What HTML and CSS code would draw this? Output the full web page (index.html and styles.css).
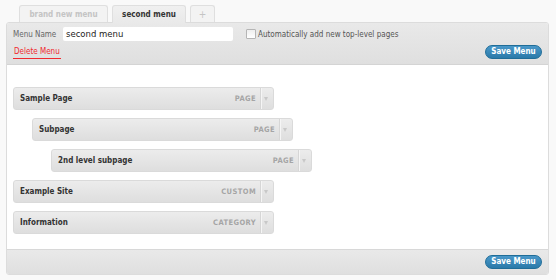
FILE: index.html
```html
<!DOCTYPE html>
<html>
<head>
<meta charset="utf-8">
<link rel="stylesheet" href="styles.css">
</head>
<body>
<div class="wrap">
  <div class="tabs">
    <div class="tab">brand new menu</div>
    <div class="tab active">second menu</div>
    <div class="tab plus">+</div>
  </div>
  <div class="panel">
    <div class="header">
      <div class="row1">
        <span class="label">Menu Name</span>
        <div class="input">second menu</div>
        <span class="check"></span>
        <span class="auto">Automatically add new top-level pages</span>
      </div>
      <div class="row2">
        <a class="delete">Delete Menu</a>
        <button class="save">Save Menu</button>
      </div>
    </div>
    <div class="body">
      <div class="item"><span class="title">Sample Page</span><span class="type">PAGE</span><span class="arrow"></span></div>
      <div class="item l1"><span class="title">Subpage</span><span class="type">PAGE</span><span class="arrow"></span></div>
      <div class="item l2"><span class="title">2nd level subpage</span><span class="type">PAGE</span><span class="arrow"></span></div>
      <div class="item"><span class="title">Example Site</span><span class="type">CUSTOM</span><span class="arrow"></span></div>
      <div class="item"><span class="title">Information</span><span class="type">CATEGORY</span><span class="arrow"></span></div>
    </div>
    <div class="footer">
      <button class="save">Save Menu</button>
    </div>
  </div>
</div>
</body>
</html>
```
FILE: styles.css
```css
* { box-sizing: border-box; }
html, body { margin: 0; padding: 0; }
body {
  background: #f9f9f9;
  font-family: "DejaVu Sans Condensed", "DejaVu Sans", sans-serif;
  font-size: 8px;
  color: #333;
  width: 556px;
  height: 280px;
  overflow: hidden;
}
.wrap { padding: 5px 7px 0 6px; }
.tabs {
  display: flex;
  gap: 4px;
  padding-left: 13px;
  height: 17px;
  align-items: flex-end;
}
.tab {
  height: 17px;
  padding: 0;
  border: 1px solid #dfdfdf;
  border-bottom: none;
  border-radius: 3px 3px 0 0;
  background: #f3f3f3;
  color: #c4c4c4;
  font-weight: bold;
  font-size: 8px;
  white-space: nowrap;
  display: flex;
  align-items: center;
  justify-content: center;
  width: 89px;
}
.tab.active {
  background: linear-gradient(#f0f0f0, #e9e9e9);
  color: #333;
  width: 74px;
  height: 18px;
  margin-bottom: -1px;
}
.tab.plus { width: 25px; font-weight: normal; font-size: 10px; }
.panel {
  border: 1px solid #dcdcdc;
  border-radius: 3px;
  overflow: hidden;
  width: 543px;
}
.header {
  height: 42px;
  background: linear-gradient(#e9e9e9, #dfdfdf);
  border-bottom: 1px solid #d4d4d4;
  padding: 4px 6px 0 6px;
}
.row1 { display: flex; align-items: center; height: 14px; }
.label { color: #666; width: 50px; }
.input {
  width: 170px;
  height: 14px;
  background: #fff;
  border-radius: 2px;
  color: #222;
  font-family: "DejaVu Sans", sans-serif;
  font-size: 8.5px;
  padding-left: 3px;
  line-height: 14px;
}
.check {
  width: 10px;
  height: 10px;
  border: 1px solid #b5b5b5;
  background: linear-gradient(#eee, #fff);
  border-radius: 1px;
  margin-left: 13px;
  margin-right: 2px;
}
.auto { color: #555; }
.row2 {
  display: flex;
  justify-content: space-between;
  align-items: flex-end;
  margin-top: 4px;
  height: 14px;
}
.delete {
  color: #f0292f;
  border-bottom: 1px solid #f0292f;
  padding: 0 1px 1px 1px;
  line-height: 10px;
}
.save {
  width: 57px;
  height: 14px;
  padding: 0;
  border: 1px solid #1f6d98;
  border-radius: 8px;
  background: linear-gradient(#4a98c9, #2a7aa9);
  color: #fff;
  font-family: "DejaVu Sans Condensed", "DejaVu Sans", sans-serif;
  font-weight: bold;
  font-size: 8px;
  line-height: 12px;
}
.body {
  background: #fff;
  height: 184px;
  padding: 22px 0 0 6px;
}
.item {
  width: 261px;
  height: 23px;
  margin-bottom: 8px;
  border: 1px solid #dadada;
  border-radius: 3px;
  background: linear-gradient(#ececec, #dedede);
  display: flex;
  align-items: center;
}
.item.l1 { margin-left: 19px; }
.item.l2 { margin-left: 38px; }
.title { flex: 1; padding-left: 6px; font-weight: bold; color: #333; font-size: 8px; }
.type {
  color: #a5a5a5;
  font-weight: bold;
  font-size: 7.5px;
  letter-spacing: 0.4px;
  padding-right: 5px;
}
.arrow {
  width: 12px;
  height: 100%;
  border-left: 1px solid #f5f5f5;
  box-shadow: -1px 0 0 #d6d6d6;
  position: relative;
}
.arrow::after {
  content: "";
  position: absolute;
  left: 2px;
  top: 9px;
  border-left: 2.5px solid transparent;
  border-right: 2.5px solid transparent;
  border-top: 4px solid #c8c8c8;
}
.footer {
  height: 25px;
  background: linear-gradient(#e9e9e9, #dfdfdf);
  border-top: 1px solid #d8d8d8;
  display: flex;
  justify-content: flex-end;
  align-items: center;
  padding-right: 6px;
}
```
